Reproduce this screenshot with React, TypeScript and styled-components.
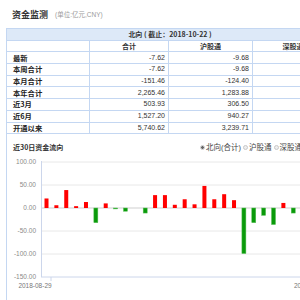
import styled, { createGlobalStyle } from "styled-components";

const GlobalStyle = createGlobalStyle`
  body {
    margin: 0;
    background: #fff;
    font-family: "Liberation Sans", "Noto Sans CJK SC", sans-serif;
    color: #333;
  }
`;

const Page = styled.div`
  width: 340px;
  height: 300px;
  overflow: hidden;
  background: #fff;
`;

const TitleBar = styled.div`
  height: 28px;
  display: flex;
  align-items: center;
  gap: 7px;
  padding-left: 12px;
`;

const Title = styled.h1`
  margin: 0;
  font-size: 9px;
  font-weight: bold;
  color: #333;
  font-family: "Noto Sans CJK SC", sans-serif;
`;

const Unit = styled.span`
  font-size: 6.5px;
  color: #9a9a9a;
  font-family: "Liberation Sans", "Noto Sans CJK SC", sans-serif;
`;

const Table = styled.table`
  margin-left: 6px;
  width: 327px;
  border-collapse: collapse;
  table-layout: fixed;
  font-size: 7px;
`;

const Row = styled.tr`
  height: 11.7px;
`;

const HeadCell = styled.th<{ $band?: boolean }>`
  border: 1px solid #c4d7f2;
  background: ${(p) => (p.$band ? "#dde9f8" : "#fff")};
  font-weight: bold;
  font-size: 7px;
  padding: 0;
  line-height: 10px;
  text-align: center;
  color: #333;
  font-family: "Noto Sans CJK SC", sans-serif;
`;

const Label = styled.td`
  border: 1px solid #c4d7f2;
  font-weight: bold;
  font-size: 7.3px;
  padding: 0 0 0 6px;
  line-height: 10px;
  color: #222;
  font-family: "Noto Sans CJK SC", sans-serif;
`;

const Num = styled.td`
  border: 1px solid #c4d7f2;
  text-align: right;
  padding: 0 3px 0 0;
  line-height: 10px;
  color: #333;
`;

const ChartPanel = styled.section`
  margin-left: 6px;
  border-left: 1px solid #c4d7f2;
  height: 170px;
`;

const ChartHead = styled.div`
  height: 22px;
  display: flex;
  align-items: flex-end;
  justify-content: space-between;
  padding: 0 0 4px 6px;
  box-sizing: border-box;
`;

const ChartTitle = styled.span`
  font-size: 7px;
  font-weight: bold;
  color: #333;
  font-family: "Noto Sans CJK SC", sans-serif;
  line-height: 9px;
`;

const Options = styled.div`
  display: flex;
  align-items: center;
  gap: 2px;
  width: 140px;
`;

const Option = styled.label`
  display: flex;
  align-items: center;
  gap: 1px;
  font-size: 7.5px;
  color: #444;
  line-height: 9px;
  font-family: "Liberation Sans", "Noto Sans CJK SC", sans-serif;
`;

const Radio = styled.span<{ $on?: boolean }>`
  width: 5px;
  height: 5px;
  border-radius: 50%;
  border: 1px solid #c8c8c8;
  background: ${(p) => (p.$on ? "radial-gradient(circle, #666 0 1.3px, #eee 1.6px)" : "#eee")};
  box-sizing: border-box;
`;

const rows: [string, string, string][] = [
  ["最新", "-7.62", "-9.68"],
  ["本周合计", "-7.62", "-9.68"],
  ["本月合计", "-151.46", "-124.40"],
  ["本年合计", "2,265.46", "1,283.88"],
  ["近3月", "503.93", "306.50"],
  ["近6月", "1,527.20", "940.27"],
  ["开通以来", "5,740.62", "3,239.71"],
];

const flows = [
  20.7, 6, 39, 4, 13, -32, 10, -2, -7, 0, -11, 28, 28, 7, 19, 8, 48, 19, 30, 17,
  -99, -32, -16, -36, 11, -11, 14, -20, 9, -7,
];

const zero = 208;
const scale = 23 / 50;
const ticks = [100, 50, 0, -50, -100, -150];

function FlowChart() {
  return (
    <svg width={333} height={144} viewBox="7 156 333 144" style={{ display: "block" }}>
      {ticks.map((t) => {
        const y = zero - t * scale;
        return (
          <g key={t}>
            <line
              x1={41}
              x2={340}
              y1={y}
              y2={y}
              stroke={t === 0 ? "#cfcfcf" : t === -150 ? "#ccd6eb" : "#e8e8e8"}
              strokeWidth={1}
            />
            <text
              x={36}
              y={y + 2.4}
              fontSize={6.5}
              fill="#8a8a8a"
              textAnchor="end"
              fontFamily="Liberation Sans, sans-serif"
            >
              {t.toFixed(2)}
            </text>
          </g>
        );
      })}
      <line x1={41.5} x2={41.5} y1={161} y2={277} stroke="#ccd6eb" />
      <line x1={51} x2={51} y1={277} y2={281} stroke="#ccd6eb" />
      {flows.map((v, i) => {
        const x = 44.5 + i * 9.87;
        const h = Math.abs(v) * scale;
        const y = v >= 0 ? zero - h : zero;
        return (
          <rect
            key={i}
            x={x}
            y={y}
            width={4}
            height={h}
            fill={v >= 0 ? "#ff0000" : "#0a9a0a"}
            stroke={v >= 0 ? "none" : "#58c058"}
            strokeWidth={0.5}
          />
        );
      })}
      <text x={35} y={288} fontSize={6.5} fill="#777" textAnchor="middle" fontFamily="Liberation Sans, sans-serif">
        2018-08-29
      </text>
      <text x={294} y={288} fontSize={6.5} fill="#777" fontFamily="Liberation Sans, sans-serif">
        2018-10-22
      </text>
    </svg>
  );
}

export default function App() {
  return (
    <Page>
      <GlobalStyle />
      <TitleBar>
        <Title>资金监测</Title>
        <Unit>(单位:亿元,CNY)</Unit>
      </TitleBar>
      <Table>
        <colgroup>
          <col style={{ width: 83 }} />
          <col style={{ width: 79 }} />
          <col style={{ width: 84 }} />
          <col style={{ width: 81 }} />
        </colgroup>
        <thead>
          <Row>
            <HeadCell $band colSpan={4}>
              北向 ( 截止：2018-10-22 )
            </HeadCell>
          </Row>
          <Row>
            <HeadCell />
            <HeadCell>合计</HeadCell>
            <HeadCell>沪股通</HeadCell>
            <HeadCell>深股通</HeadCell>
          </Row>
        </thead>
        <tbody>
          {rows.map(([name, total, sh]) => (
            <Row key={name}>
              <Label>{name}</Label>
              <Num>{total}</Num>
              <Num>{sh}</Num>
              <Num />
            </Row>
          ))}
        </tbody>
      </Table>
      <ChartPanel>
        <ChartHead>
          <ChartTitle>近30日资金流向</ChartTitle>
          <Options>
            <Option>
              <Radio $on />
              北向(合计)
            </Option>
            <Option>
              <Radio />
              沪股通
            </Option>
            <Option>
              <Radio />
              深股通
            </Option>
          </Options>
        </ChartHead>
        <FlowChart />
      </ChartPanel>
    </Page>
  );
}
